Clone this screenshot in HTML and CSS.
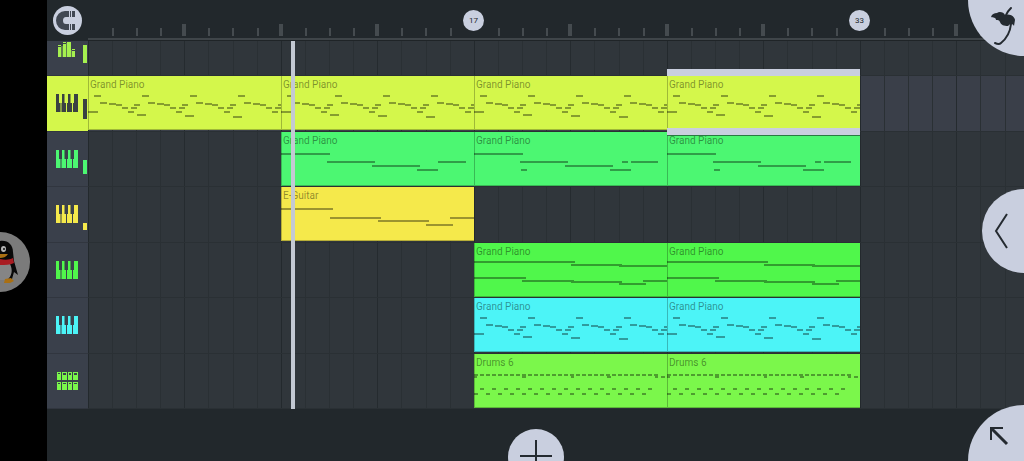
FILE: index.html
```html
<!DOCTYPE html>
<html lang="en">
<head>
<meta charset="utf-8">
<meta name="viewport" content="width=device-width, initial-scale=1">
<title>Playlist</title>
<link rel="stylesheet" href="styles.css">
</head>
<body>
<svg class="defs" aria-hidden="true">
  <symbol id="keys" viewBox="0 0 23 18"><path d="M1 0h3v9h1.500v9H1zM6.500 18V9H7V0h2.500v9H11v9zM12 18V9h1V0h2.500v9H17v9zM18 18V9h1V0h4v18z"/></symbol>
  <g id="phrase"><path d="M6 20h7M12 27h7M21 28h7M28 29h6M34 32h6M40 36h6M43 32h6M46 29h6"/></g>
  <symbol id="notes-melody" viewBox="0 0 193 53">
    <path d="M0 36h10M49 39h9M97 40h9M145 41h9"/>
    <use href="#phrase"/><use href="#phrase" x="48"/><use href="#phrase" x="96"/><use href="#phrase" x="144"/>
  </symbol>
  <symbol id="notes-bass-a" viewBox="0 0 193 53"><path d="M0 22h49M46 30h48M91 34h48M136 38h21M157 30h28"/></symbol>
  <symbol id="notes-bass-b" viewBox="0 0 193 53"><path d="M0 22h49M46 30h48M47 38h6M91 34h48M136 38h21M148 30h6M157 30h27"/></symbol>
  <symbol id="notes-guitar" viewBox="0 0 193 53"><path d="M0 22h52M49 31h51M97 34h51M145 38h27M169 31h24"/></symbol>
  <symbol id="notes-chords" viewBox="0 0 193 53"><path d="M0 19h101M97 22h51M145 23h48M0 35h52M48 38h52M97 39h51M145 41h27M169 38h24"/></symbol>
  <symbol id="notes-drums" viewBox="0 0 193 53">
    <path stroke-dasharray="4 2" d="M0 21h184"/>
    <path d="M0 23h3M48 23h4M97 23h3M133 23h4M181 23h3M187 23h4"/>
    <path stroke-dasharray="4 8" d="M6 35h174M0 40h173"/>
  </symbol>
</svg>

<aside class="edge">
  <button class="penguin" aria-label="Chat bubble">
    <svg viewBox="0 0 30 60" width="30" height="60" aria-hidden="true">
      <path fill="#090909" d="M0 9C8 8 13 13 13 20l1 9 4 14-4-3-2 7H0z"/>
      <path fill="#858585" d="M0 31l10 1c3 6 2 12-3 16H0z"/>
      <ellipse cx="3.500" cy="17" rx="2.500" ry="3" fill="#b5b5b5"/><circle cx="4" cy="17" r="1" fill="#111"/>
      <path fill="#a96f12" d="M0 22h8c-2 3-5 4-8 4zM5 47l6-1 3 3-4 2H4z"/>
      <path fill="#a91c22" d="M0 27c5 1 9 1 13-1l1 5c-4 2-9 2-14 2z"/>
    </svg>
  </button>
</aside>

<main class="app">
  <header class="ruler">
    <div class="corner">
      <button class="snap" aria-label="Snap">
        <svg viewBox="0 0 29 29" width="29" height="29" aria-hidden="true"><path fill="#414853" d="M16 5h-4a9 9.500 0 0 0 0 19h4v-6h-3a3 3.500 0 0 1 0-7h3zM17 5h1v6h-1zM19 5h3v6h-3zM17 18h1v6h-1zM19 18h3v6h-3z"/></svg>
      </button>
    </div>
    <div class="scale">
      <svg class="ticks" width="100%" height="40" aria-hidden="true">
        <defs><pattern id="tick" width="193" height="40" patternUnits="userSpaceOnUse"><path fill="#454b4f" d="M24 28h2v8h-2zM48 28h2v8h-2zM72 28h2v8h-2zM94 24h4v12h-4zM120 28h2v8h-2zM144 28h2v8h-2zM169 28h2v8h-2z"/></pattern></defs>
        <rect width="100%" height="40" fill="url(#tick)"/>
        <path fill="#454b4f" d="M191 24h4v12h-4zM577 24h4v12h-4z"/>
      </svg>
      <span class="marker bar-17">17</span>
      <span class="marker bar-33">33</span>
    </div>
  </header>

  <section class="tracks">
    <div class="track master">
      <div class="head">
        <svg class="mixer" viewBox="0 0 23 18" width="23" height="18" aria-hidden="true"><path opacity=".35" d="M6 5h2v11H6zM11 2h1v14h-1zM16 9h1v7h-1z"/><path d="M3 6h3v10H3zM8 3h3v13H8zM12 1h4v15h-4zM17 10h3v6h-3zM3 4h3v1H3zM8 1h3v1H8zM17 8h3v1h-3z"/></svg>
        <i class="meter"></i>
      </div>
      <div class="lane"></div>
    </div>
    <div class="track lime selected">
      <div class="head"><svg class="icon"><use href="#keys"/></svg><i class="meter"></i></div>
      <div class="lane">
        <div class="clip">Grand Piano<svg class="notes"><use href="#notes-melody"/></svg></div>
        <div class="clip">Grand Piano<svg class="notes"><use href="#notes-melody"/></svg></div>
        <div class="clip">Grand Piano<svg class="notes"><use href="#notes-melody"/></svg></div>
        <div class="clip picked">Grand Piano<svg class="notes"><use href="#notes-melody"/></svg></div>
      </div>
    </div>
    <div class="track mint">
      <div class="head"><svg class="icon"><use href="#keys"/></svg><i class="meter"></i></div>
      <div class="lane">
        <div class="clip from-2">Grand Piano<svg class="notes"><use href="#notes-bass-a"/></svg></div>
        <div class="clip">Grand Piano<svg class="notes"><use href="#notes-bass-b"/></svg></div>
        <div class="clip">Grand Piano<svg class="notes"><use href="#notes-bass-b"/></svg></div>
      </div>
    </div>
    <div class="track yellow">
      <div class="head"><svg class="icon"><use href="#keys"/></svg><i class="meter"></i></div>
      <div class="lane">
        <div class="clip from-2">E-Guitar<svg class="notes"><use href="#notes-guitar"/></svg></div>
      </div>
    </div>
    <div class="track green">
      <div class="head"><svg class="icon"><use href="#keys"/></svg></div>
      <div class="lane">
        <div class="clip from-3">Grand Piano<svg class="notes"><use href="#notes-chords"/></svg></div>
        <div class="clip">Grand Piano<svg class="notes"><use href="#notes-chords"/></svg></div>
      </div>
    </div>
    <div class="track cyan">
      <div class="head"><svg class="icon"><use href="#keys"/></svg></div>
      <div class="lane">
        <div class="clip from-3">Grand Piano<svg class="notes"><use href="#notes-melody"/></svg></div>
        <div class="clip">Grand Piano<svg class="notes"><use href="#notes-melody"/></svg></div>
      </div>
    </div>
    <div class="track leaf">
      <div class="head">
        <svg class="icon" viewBox="0 0 23 18"><path fill-rule="evenodd" d="M2 0h4v8H2zM7 0h5v8H7zM13 0h4v8h-4zM18 0h5v8h-5zM2 10h4v8H2zM7 10h5v8H7zM13 10h4v8h-4zM18 10h5v8h-5zM3 1v1h2V1zM8 1v2h3V1zM14 1v2h2V1zM19 1v2h3V1zM3 11v1h2v-1zM8 11v1h3v-1zM14 11v1h2v-1zM19 11v1h3v-1z"/></svg>
      </div>
      <div class="lane">
        <div class="clip from-3">Drums 6<svg class="notes"><use href="#notes-drums"/></svg></div>
        <div class="clip">Drums 6<svg class="notes"><use href="#notes-drums"/></svg></div>
      </div>
    </div>
    <div class="playhead"></div>
  </section>

  <button class="round add" aria-label="Add track">
    <svg viewBox="0 0 56 56" width="56" height="56" aria-hidden="true"><path stroke="#242a30" stroke-width="2" d="M28 11v34M12 27h32"/></svg>
  </button>
  <button class="round tools" aria-label="Tools">
    <svg viewBox="0 0 112 112" width="112" height="112" aria-hidden="true">
      <path fill="#242a30" d="M23 73C24 70 26 69 29 69 31 67 36 68 37 71 42 69 47 73 47 76L46 82C44 79 42 80 40 82 36 82 33 81 32 78 31 76 30 76 28 76 28 73 25 74 23 73z"/>
      <path fill="none" stroke="#242a30" stroke-width="2" stroke-linecap="round" d="M38 71c1-3 3-5 5-7M43 80c-1 9-5 15-10 19-2 2-4 1-6 0"/>
    </svg>
  </button>
  <button class="round panel" aria-label="Open panel">
    <svg viewBox="0 0 84 84" width="84" height="84" aria-hidden="true"><path fill="none" stroke="#242a30" stroke-width="2" d="M25 25L14 42l11 17"/></svg>
  </button>
  <button class="round resize" aria-label="Resize view">
    <svg viewBox="0 0 112 112" width="112" height="112" aria-hidden="true"><path fill="none" stroke="#242a30" stroke-width="2" d="M23 35V23h12"/><path stroke="#242a30" stroke-width="3" d="M23 23l16 16"/></svg>
  </button>
</main>
</body>
</html>
```
FILE: styles.css
```css
* { box-sizing: border-box; }

body {
  display: flex;
  min-height: 100vh;
  margin: 0;
  overflow: hidden;
  background: #000;
  font-family: Roboto, "Liberation Sans", sans-serif;
  font-size: 10px;
  line-height: 12px;
}

button {
  padding: 0;
  border: 0;
  cursor: pointer;
}

svg { display: block; }

.defs {
  position: absolute;
  width: 0;
  height: 0;
}

.edge {
  display: flex;
  flex: 0 0 47px;
  align-items: center;
  padding-top: 62px;
}

.penguin {
  overflow: hidden;
  border-radius: 0 30px 30px 0;
  background: #7b7b7b;
}

.app {
  position: relative;
  flex: 1;
  min-width: 0;
  overflow: hidden;
  background: #22282c;
}

.ruler {
  display: flex;
  height: 41px;
}

.corner {
  display: flex;
  flex: 0 0 41px;
  align-items: center;
  justify-content: center;
}

.snap {
  border-radius: 50%;
  background: #c9cfdf;
}

.scale {
  position: relative;
  flex: 1;
  border-bottom: 1px solid #1f2427;
}

.ticks { border-bottom: 2px solid #3f4549; }

.marker {
  position: absolute;
  top: 10px;
  width: 21px;
  border-radius: 50%;
  background: #c9cfdf;
  color: #22282c;
  font-size: 8px;
  line-height: 21px;
  text-align: center;
}

.bar-17 { left: 375px; }
.bar-33 { left: 761px; }

.tracks {
  position: relative;
  display: grid;
  grid-template-rows: 35px 56px 55px 56px 55px 56px 55px;
}

.track {
  display: flex;
  color: var(--tint);
}

.master { --tint: #a5f04f; }
.lime { --tint: #d4f74b; }
.mint { --tint: #4cf772; }
.yellow { --tint: #f5e94b; }
.green { --tint: #50f74b; }
.cyan { --tint: #4cf4f7; }
.leaf { --tint: #7bf74b; }

.head {
  display: flex;
  flex: 0 0 41px;
  align-items: flex-end;
  justify-content: space-between;
  padding: 0 1px 12px 8px;
  border-bottom: 1px solid #31363f;
  background: #3a404b;
}

.head svg { fill: currentColor; }

.icon {
  align-self: flex-start;
  width: 23px;
  height: 18px;
  margin-top: 18px;
}

.mixer { align-self: flex-start; }

.meter {
  width: 4px;
  background: currentColor;
}

.master .meter { height: 18px; }
.lime .meter { height: 20px; }
.mint .meter { height: 14px; }
.yellow .meter { height: 7px; }

.selected .head {
  background: var(--tint);
  color: #3a4142;
}

.lane {
  display: grid;
  flex: 1;
  grid-template-columns: repeat(4, 193px);
  min-width: 0;
  border-bottom: 1px solid #2a3034;
  background: #30363b linear-gradient(90deg,
    #23292d 1px, transparent 1px 24px,
    #2a3034 24px 25px, transparent 25px 48px,
    #2a3034 48px 49px, transparent 49px 72px,
    #2a3034 72px 73px, transparent 73px 96px,
    #252b2f 96px 97px, transparent 97px 120px,
    #2a3034 120px 121px, transparent 121px 145px,
    #2a3034 145px 146px, transparent 146px 169px,
    #2a3034 169px 170px, transparent 170px) 0 0 / 193px 100%;
}

.selected .lane { background-color: #3a3f49; }

.clip {
  position: relative;
  height: 54px;
  padding: 3px 1px;
  border: solid rgba(0, 0, 0, .25);
  border-width: 0 0 1px 1px;
  background: var(--tint);
  color: rgba(0, 0, 0, .42);
}

.from-2 { grid-column-start: 2; }
.from-3 { grid-column-start: 3; }

.notes {
  position: absolute;
  top: 0;
  left: -1px;
  width: 193px;
  height: 53px;
  fill: none;
  stroke: #000;
  stroke-width: 2;
  opacity: .36;
}

.picked::before,
.picked::after {
  position: absolute;
  right: 0;
  left: -1px;
  height: 7px;
  background: #c9cfdf;
  content: "";
}

.picked::before { top: -7px; }

.picked::after {
  z-index: 1;
  bottom: -7px;
  border-bottom: 1px solid #287a42;
}

.playhead {
  position: absolute;
  z-index: 2;
  top: 0;
  bottom: 0;
  left: 244px;
  width: 4px;
  background: #c3c9d3;
}

.round {
  position: absolute;
  z-index: 3;
  border-radius: 50%;
  background: #c9cfdf;
}

.add {
  bottom: -24px;
  left: 50%;
  transform: translateX(-50%);
}

.tools {
  top: -56px;
  right: -56px;
}

.panel {
  top: 50%;
  right: -42px;
  transform: translateY(-50%);
}

.resize {
  right: -56px;
  bottom: -56px;
}
```
